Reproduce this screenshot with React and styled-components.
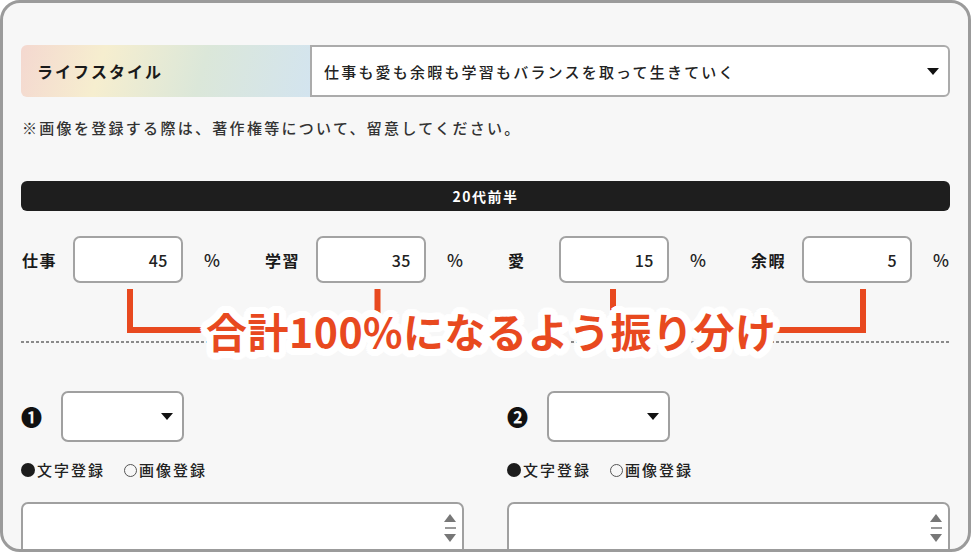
import styled, { createGlobalStyle } from 'styled-components';

// global reset
const GlobalStyle = createGlobalStyle`
  html, body {
    margin: 0;
    padding: 0;
    background: #fff;
  }
  body {
    font-family: "Noto Sans CJK JP", "Noto Sans", sans-serif;
    color: #222;
  }
`;

const ORANGE = '#e8491f';

// white outline for the callout text
const outline = [7, 5, 3]
  .flatMap((r) =>
    Array.from({ length: 24 }, (_, i) => {
      const a = (i / 24) * Math.PI * 2;
      return `${(Math.cos(a) * r).toFixed(1)}px ${(Math.sin(a) * r).toFixed(1)}px 0 #fff`;
    })
  )
  .join(', ');

// styled
const Frame = styled.div`
  box-sizing: border-box;
  width: 971px;
  height: 552px;
  border: 3px solid #9b9b9b;
  border-radius: 20px;
  background: #f7f7f7;
  padding: 42px 18px 0;
  overflow: hidden;
`;

const LifestyleRow = styled.div`
  display: flex;
  height: 52px;
`;

const LifestyleLabel = styled.div`
  width: 289px;
  display: flex;
  align-items: center;
  padding-left: 16px;
  box-sizing: border-box;
  border-radius: 6px 0 0 6px;
  background: linear-gradient(105deg, #f4d8d0 0%, #f6eecf 28%, #dbe7d9 62%, #d3e4ef 100%);
  font-size: 16px;
  font-weight: 700;
  letter-spacing: 2px;
  color: #1a1a1a;
`;

const LifestyleSelect = styled.div`
  flex: 1;
  display: flex;
  align-items: center;
  justify-content: space-between;
  box-sizing: border-box;
  padding: 0 9px 0 12px;
  background: #fff;
  border: 2px solid #ababab;
  border-radius: 0 6px 6px 0;
  font-size: 15px;
  font-weight: 500;
  letter-spacing: 2.2px;
  color: #222;
`;

const Caret = styled.span`
  width: 0;
  height: 0;
  border-left: 6px solid transparent;
  border-right: 6px solid transparent;
  border-top: 7px solid #111;
`;

const Note = styled.p`
  margin: 21px 0 0 1px;
  font-size: 15px;
  font-weight: 500;
  line-height: 20px;
  letter-spacing: 2.3px;
  color: #333;
`;

const AgeBar = styled.div`
  margin-top: 43px;
  height: 30px;
  display: flex;
  align-items: center;
  justify-content: center;
  background: #1e1e1e;
  border-radius: 6px;
  color: #fff;
  font-size: 14px;
  font-weight: 700;
  letter-spacing: 1.5px;
`;

const RatioSection = styled.div`
  position: relative;
  margin-top: 25px;
`;

const RatioRow = styled.div`
  display: flex;
  justify-content: space-between;
`;

const RatioGroup = styled.div`
  display: flex;
  align-items: center;
`;

const RatioLabel = styled.span`
  width: 52px;
  padding-left: 1px;
  box-sizing: border-box;
  font-size: 16px;
  font-weight: 700;
  letter-spacing: 1.5px;
  color: #1a1a1a;
`;

const NumberBox = styled.div`
  width: 110px;
  height: 47px;
  box-sizing: border-box;
  display: flex;
  align-items: center;
  justify-content: flex-end;
  padding-right: 13px;
  background: #fff;
  border: 2px solid #a3a3a3;
  border-radius: 7px;
  font-size: 16px;
  font-weight: 500;
  letter-spacing: 0.5px;
`;

const Percent = styled.span`
  margin-left: 21px;
  width: 17px;
  font-size: 17px;
  font-weight: 500;
`;

const Divider = styled.div`
  margin-top: 58px;
  height: 2px;
  background: repeating-linear-gradient(90deg, #8a8a8a 0 3px, transparent 3px 5px);
`;

const Callout = styled.div`
  position: absolute;
  top: 53px;
  left: 0;
  right: 0;
  height: 70px;
  display: flex;
  align-items: flex-start;
`;

const Bracket = styled.svg`
  position: absolute;
  top: 0;
  left: 0;
`;

const CalloutText = styled.span`
  position: relative;
  margin: 21px 0 0 185px;
  font-size: 41px;
  line-height: 41px;
  font-weight: 700;
  letter-spacing: 0.5px;
  color: ${ORANGE};
  text-shadow: ${outline};
  white-space: nowrap;
`;

const ChoiceGrid = styled.div`
  display: grid;
  grid-template-columns: 1fr 1fr;
  column-gap: 43px;
  margin-top: 48px;
`;

const ChoiceColumn = styled.div`
  display: flex;
  flex-direction: column;
`;

const ChoiceHead = styled.div`
  display: flex;
  align-items: center;
`;

const Numeral = styled.span`
  width: 40px;
  font-size: 21px;
  line-height: 21px;
  font-weight: 700;
  color: #111;
`;

const SmallSelect = styled.div`
  width: 123px;
  height: 51px;
  box-sizing: border-box;
  display: flex;
  align-items: center;
  justify-content: flex-end;
  padding-right: 9px;
  background: #fff;
  border: 2px solid #a0a0a0;
  border-radius: 7px;
`;

const RadioRow = styled.div`
  display: flex;
  gap: 19px;
  margin-top: 18px;
  font-size: 15px;
  font-weight: 500;
  line-height: 20px;
  letter-spacing: 2px;
  color: #222;
`;

const RadioOption = styled.label`
  display: flex;
  align-items: center;
  gap: 2px;
`;

const RadioMark = styled.span`
  width: 14px;
  height: 14px;
  box-sizing: border-box;
  border-radius: 50%;
  ${({ $checked }) =>
    $checked ? 'background: #1c1c1c;' : 'border: 1.5px solid #555; width: 13px; height: 13px;'}
`;

const TextBox = styled.div`
  margin-top: 22px;
  height: 90px;
  box-sizing: border-box;
  display: flex;
  justify-content: flex-end;
  padding: 10px 6px 0 0;
  background: #fff;
  border: 2px solid #a0a0a0;
  border-radius: 7px;
`;

const Spinner = styled.div`
  display: flex;
  flex-direction: column;
  align-items: center;
  gap: 5px;
`;

const Arrow = styled.span`
  width: 0;
  height: 0;
  border-left: 6.5px solid transparent;
  border-right: 6.5px solid transparent;
  ${({ $up }) => ($up ? 'border-bottom: 8px solid #777;' : 'border-top: 8px solid #777;')}
`;

const Dash = styled.span`
  width: 11px;
  height: 2px;
  background: #999;
`;

const ratios = [
  { label: '仕事', value: 45 },
  { label: '学習', value: 35 },
  { label: '愛', value: 15 },
  { label: '余暇', value: 5 },
];

const choices = ['❶', '❷'];

export default function App() {
  return (
    <>
      <GlobalStyle />
      <Frame>
        <LifestyleRow>
          <LifestyleLabel>ライフスタイル</LifestyleLabel>
          <LifestyleSelect>
            仕事も愛も余暇も学習もバランスを取って生きていく
            <Caret />
          </LifestyleSelect>
        </LifestyleRow>
        <Note>※画像を登録する際は、著作権等について、留意してください。</Note>

        <AgeBar>20代前半</AgeBar>

        <RatioSection>
          <RatioRow>
            {ratios.map((r) => (
              <RatioGroup key={r.label}>
                <RatioLabel>{r.label}</RatioLabel>
                <NumberBox>{r.value}</NumberBox>
                <Percent>%</Percent>
              </RatioGroup>
            ))}
          </RatioRow>
          <Divider />
          {/* 注釈 */}
          <Callout>
            <Bracket width="929" height="60" viewBox="0 0 929 60">
              <g fill="none" stroke={ORANGE} strokeWidth="6">
                <path d="M109 0 V41 H200" />
                <path d="M356.5 0 V30" />
                <path d="M592 0 V30" />
                <path d="M842 0 V41 H740" />
              </g>
            </Bracket>
            <CalloutText>合計100%になるよう振り分け</CalloutText>
          </Callout>
        </RatioSection>

        <ChoiceGrid>
          {choices.map((n) => (
            <ChoiceColumn key={n}>
              <ChoiceHead>
                <Numeral>{n}</Numeral>
                <SmallSelect>
                  <Caret />
                </SmallSelect>
              </ChoiceHead>
              <RadioRow>
                <RadioOption>
                  <RadioMark $checked />
                  文字登録
                </RadioOption>
                <RadioOption>
                  <RadioMark />
                  画像登録
                </RadioOption>
              </RadioRow>
              <TextBox>
                <Spinner>
                  <Arrow $up />
                  <Dash />
                  <Arrow />
                </Spinner>
              </TextBox>
            </ChoiceColumn>
          ))}
        </ChoiceGrid>
      </Frame>
    </>
  );
}
